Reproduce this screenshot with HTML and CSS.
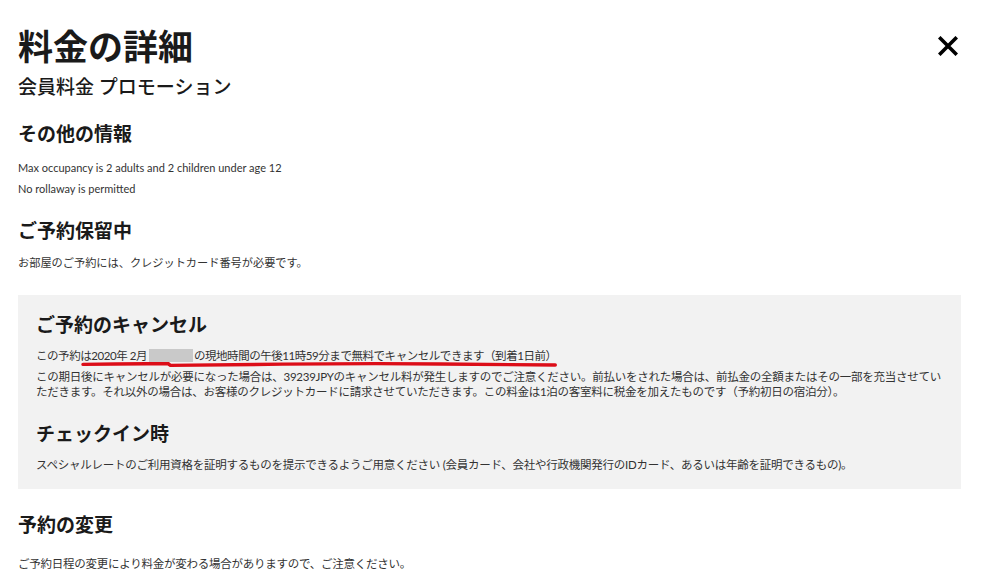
FILE: index.html
```html
<!DOCTYPE html>
<html>
  <head>
    <meta charset="UTF-8" />
    <link rel="stylesheet" href="styles.css">
  </head>
  <body>
    <div id="details">
      <div class="header">
        <h1 class="title">料金の詳細</h1>
        <button class="close" aria-label="閉じる">
          <svg viewBox="0 0 20 20" width="20" height="20">
            <path d="M2.5 2.5 L17.5 17.5 M17.5 2.5 L2.5 17.5" stroke="black" stroke-width="3.6" stroke-linecap="square" />
          </svg>
        </button>
      </div>
      <h2 class="rate_name">会員料金 プロモーション</h2>

      <h3 class="section_title first">その他の情報</h3>
      <p class="small">Max occupancy is 2 adults and 2 children under age 12</p>
      <p class="small">No rollaway is permitted</p>

      <h3 class="section_title">ご予約保留中</h3>
      <p class="small jp">お部屋のご予約には、クレジットカード番号が必要です。</p>

      <div class="policy_box">
        <h3 class="section_title">ご予約のキャンセル</h3>
        <p class="note deadline">この予約は<span class="marked">2020年 2月<span class="redacted"></span>の現地時間の午後11時59分まで無料でキャンセルできます（到着1日前）<svg class="pen" viewBox="0 0 470 7" preserveAspectRatio="none"><path d="M2 3.4 C 30 2.8, 60 2.6, 86 2.8 L 88 4.4 C 160 3.8, 220 2.6, 290 2.6 C 350 2.8, 400 3.8, 467 4" fill="none" stroke="#dc0d18" stroke-width="3.4" stroke-linecap="round" /></svg></span></p>
        <p class="note">この期日後にキャンセルが必要になった場合は、39239JPYのキャンセル料が発生しますのでご注意ください。前払いをされた場合は、前払金の全額またはその一部を充当させていただきます。それ以外の場合は、お客様のクレジットカードに請求させていただきます。この料金は1泊の客室料に税金を加えたものです（予約初日の宿泊分）。</p>

        <h3 class="section_title">チェックイン時</h3>
        <p class="note">スペシャルレートのご利用資格を証明するものを提示できるようご用意ください (会員カード、会社や行政機関発行のIDカード、あるいは年齢を証明できるもの)。</p>
      </div>

      <h3 class="section_title">予約の変更</h3>
      <p class="note last">ご予約日程の変更により料金が変わる場合がありますので、ご注意ください。</p>
    </div>
  </body>
</html>
```

FILE: styles.css
```css
body {
    margin: 0;
    background: white;
    color: #2b2b2b;
    font-family: "Lato", "Noto Sans CJK JP", sans-serif;
}
#details {
    padding: 24px 30px 0 18px;
}
.header {
    display: flex;
    justify-content: space-between;
    align-items: center;
}
.title {
    margin: 0;
    font-size: 35px;
    line-height: 44px;
    font-weight: 700;
    color: #1a1a1a;
}
.close {
    border: none;
    background: none;
    padding: 0;
    margin-right: 3px;
    width: 20px;
    height: 20px;
    cursor: pointer;
}
.close svg { display: block; }
.rate_name {
    margin: 7px 0 0 0;
    font-size: 19px;
    line-height: 24px;
    font-weight: 500;
    color: #1a1a1a;
}
.section_title {
    margin: 20px 0 0 0;
    font-size: 19px;
    line-height: 24px;
    font-weight: 700;
    color: #1a1a1a;
}
.section_title.first { margin-top: 23px; }
.section_title.first + .small { margin-top: 11px; }
.small {
    margin: 0;
    font-size: 11px;
    line-height: 21px;
    color: #333;
}
.small.jp { font-size: 11.2px; }
.section_title + .small { margin-top: 9px; }
.policy_box {
    margin-top: 22px;
    background: #f2f2f2;
    padding: 18px 18px 17px 18px;
}
.policy_box .section_title { margin-top: 23px; }
.policy_box .section_title:first-child { margin-top: 0; }
.note {
    margin: 11px 0 0 0;
    font-size: 11.5px;
    line-height: 15px;
    letter-spacing: -0.25px;
    color: #333;
}
.note.deadline { letter-spacing: -0.45px; }
.note.deadline + .note { margin-top: 6px; }
.marked {
    position: relative;
}
.redacted {
    display: inline-block;
    width: 44px;
    height: 13px;
    margin: 0 1px 0 2px;
    vertical-align: -2px;
    background: #c9c9c9;
}
.pen {
    position: absolute;
    left: -10px;
    bottom: -6px;
    width: calc(100% + 12px);
    height: 7px;
}
.policy_box + .section_title { margin-top: 24px; }
.note.last { margin-top: 19px; }
```
